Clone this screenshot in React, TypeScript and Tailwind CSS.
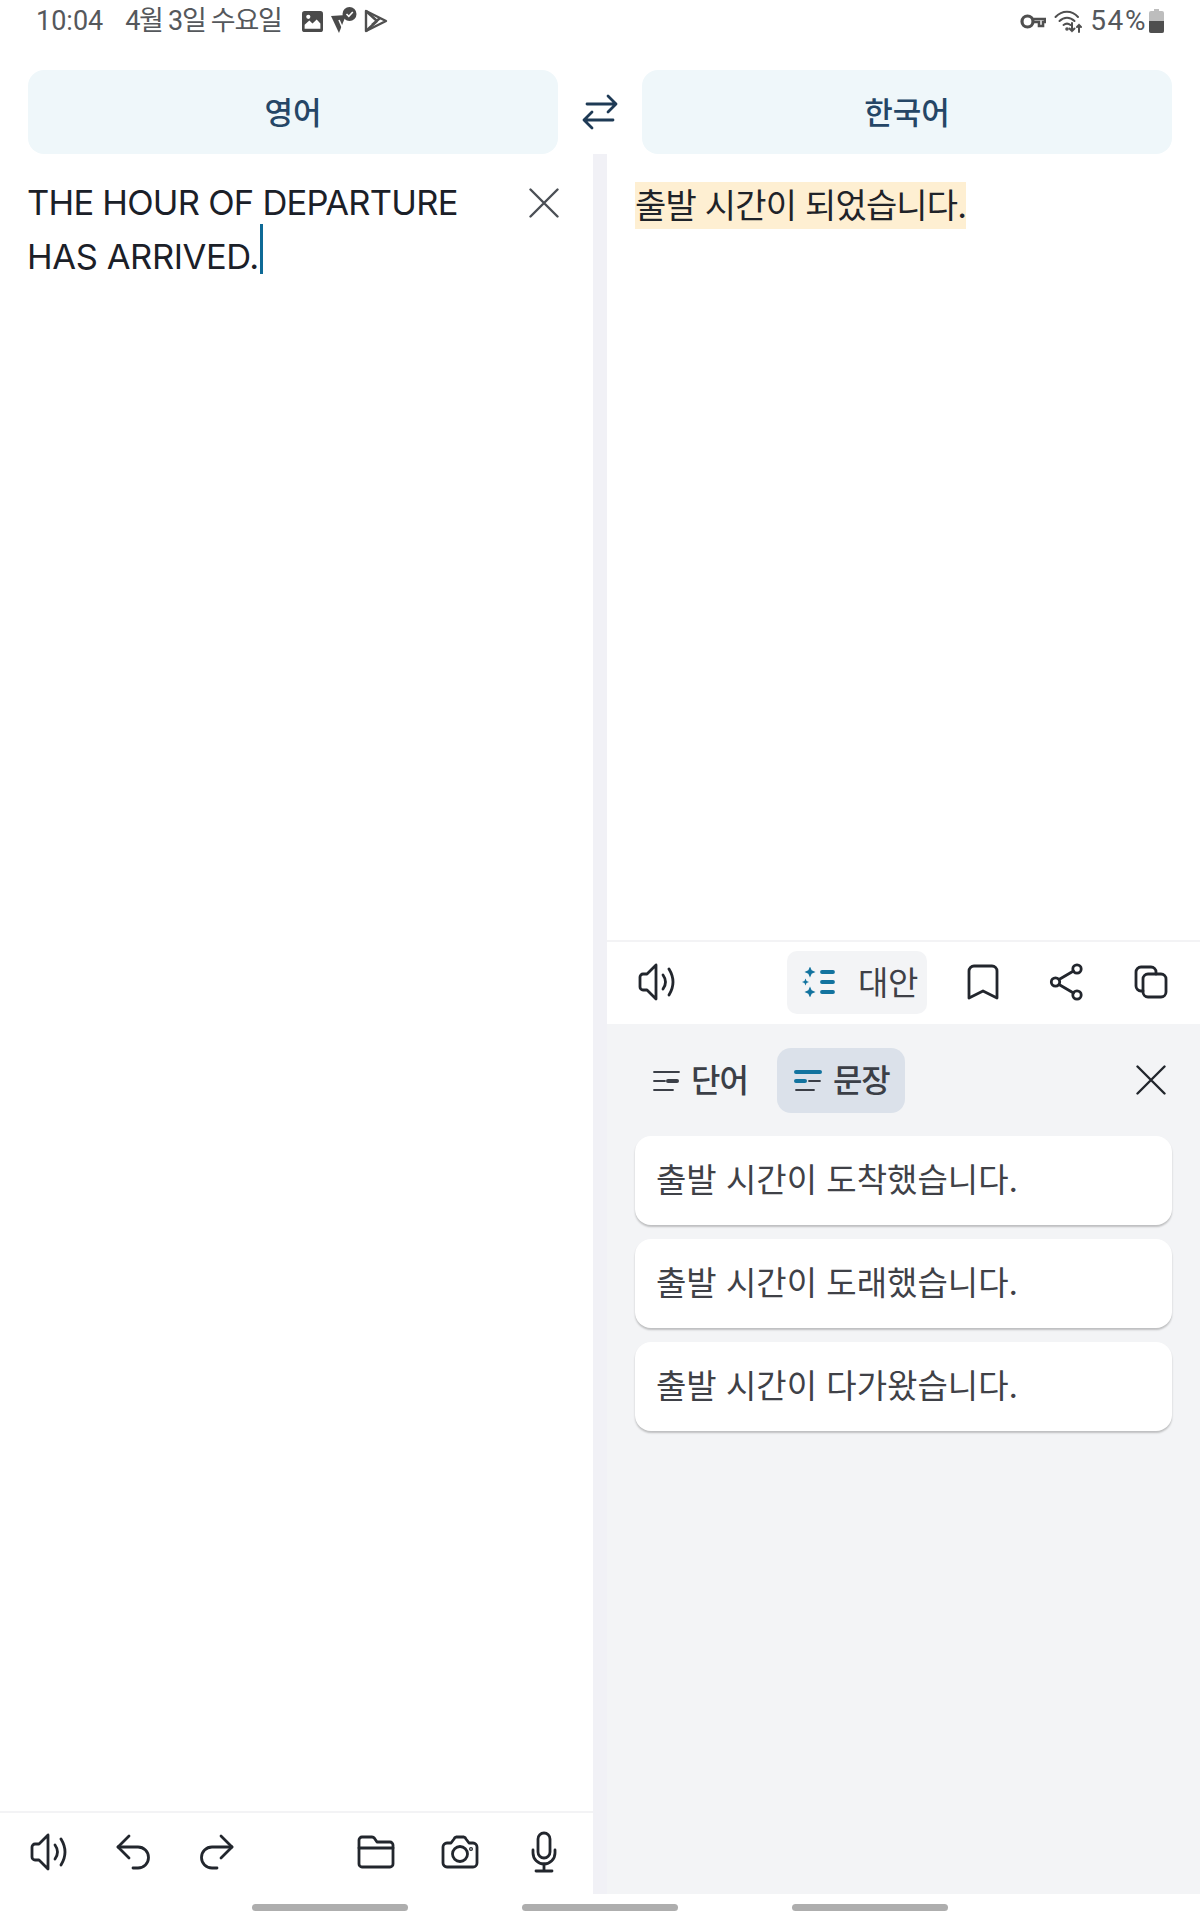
import React from "react";

function Ico({ w, h, className = "", sw = 2.8, children }: { w: number; h: number; className?: string; sw?: number; children: React.ReactNode }) {
  return (
    <svg width={w} height={h} viewBox={`0 0 ${w} ${h}`} fill="none" stroke="currentColor" strokeWidth={sw} strokeLinecap="round" strokeLinejoin="round" className={`shrink-0 ${className}`}>
      {children}
    </svg>
  );
}

const Speaker = () => (
  <Ico w={38} h={38}>
    <path d="M18 2 L9 11 H5 a3 3 0 0 0 -3 3 v10 a3 3 0 0 0 3 3 h4 L18 36 Z" />
    <path d="M25 12 q5 7 0 14" />
    <path d="M31 6 q8 13 0 26" />
  </Ico>
);
const Undo = () => (
  <Ico w={36} h={36}>
    <path d="M14 2 L3 13 L14 24" />
    <path d="M3 13 H23 a10.5 10.5 0 0 1 0 21 H18" />
  </Ico>
);
const Redo = () => (
  <Ico w={36} h={36}>
    <path d="M22 2 L33 13 L22 24" />
    <path d="M33 13 H13 a10.5 10.5 0 0 0 0 21 H18" />
  </Ico>
);
const Folder = () => (
  <Ico w={38} h={34}>
    <path d="M2 12 V5 a3 3 0 0 1 3 -3 H15 a3 3 0 0 1 2.4 1.2 L20 7 H33 a3 3 0 0 1 3 3 V29 a3 3 0 0 1 -3 3 H5 a3 3 0 0 1 -3 -3 Z" />
    <path d="M2 13 H36" />
  </Ico>
);
const Camera = () => (
  <Ico w={38} h={34}>
    <path d="M2 12 a4 4 0 0 1 4 -4 h4 l3 -4 a3 3 0 0 1 2.4 -2 h7.2 a3 3 0 0 1 2.4 2 l3 4 h4 a4 4 0 0 1 4 4 V28 a4 4 0 0 1 -4 4 H6 a4 4 0 0 1 -4 -4 Z" />
    <circle cx="19" cy="19" r="7.5" />
    <circle cx="30" cy="14" r="0.6" />
  </Ico>
);
const Mic = () => (
  <Ico w={26} h={42}>
    <rect x="7" y="2" width="12" height="25" rx="6" />
    <path d="M2 19 v3 a11 11 0 0 0 22 0 v-3" />
    <path d="M13 33 V40 M5 40 H21" />
  </Ico>
);
const Close = ({ size = 30 }: { size?: number }) => (
  <Ico w={size} h={size} sw={2.4}>
    <path d={`M1.5 1.5 L${size - 1.5} ${size - 1.5} M${size - 1.5} 1.5 L1.5 ${size - 1.5}`} />
  </Ico>
);
const Swap = () => (
  <Ico w={36} h={36} sw={2.8}>
    <path d="M5 10 H34 M26 2 L34 10 L26 18" />
    <path d="M31 26 H2 M10 18 L2 26 L10 34" />
  </Ico>
);
const Bookmark = () => (
  <Ico w={32} h={36}>
    <path d="M2 34 V7 a5 5 0 0 1 5 -5 H25 a5 5 0 0 1 5 5 V34 L16 27 Z" />
  </Ico>
);
const Share = () => (
  <Ico w={36} h={38}>
    <circle cx="6.5" cy="19" r="4.2" />
    <circle cx="28" cy="6" r="4.2" />
    <circle cx="28" cy="32" r="4.2" />
    <path d="M10 16.5 L24.5 8 M10 21.5 L24.5 30" />
  </Ico>
);
const Copy = () => (
  <Ico w={34} h={34}>
    <path d="M9 26 H7 a5 5 0 0 1 -5 -5 V7 a5 5 0 0 1 5 -5 H17 a5 5 0 0 1 5 5 V9" />
    <rect x="9" y="9" width="23" height="23" rx="5" />
  </Ico>
);
const Sparkle = ({ cx, cy, r }: { cx: number; cy: number; r: number }) => (
  <path fill="currentColor" stroke="none" d={`M${cx} ${cy - r} L${cx + r * 0.3} ${cy - r * 0.3} L${cx + r} ${cy} L${cx + r * 0.3} ${cy + r * 0.3} L${cx} ${cy + r} L${cx - r * 0.3} ${cy + r * 0.3} L${cx - r} ${cy} L${cx - r * 0.3} ${cy - r * 0.3} Z`} />
);
const Alternatives = () => (
  <Ico w={34} h={30} sw={3.8} className="text-[#12739f]">
    <Sparkle cx={8} cy={5} r={5.5} />
    <Sparkle cx={3.5} cy={15} r={3.5} />
    <Sparkle cx={8} cy={25} r={5.5} />
    <path d="M20 5 H31 M20 15 H31 M20 25 H31" />
  </Ico>
);
const TabWord = () => (
  <svg width="27" height="24" viewBox="0 0 27 24" className="shrink-0">
    <path d="M1 3 H26 M1 12 H12 M1 21 H20" stroke="#3b3f47" strokeWidth="1.8" strokeLinecap="round" />
    <path d="M15 12 H24" stroke="#3b3f47" strokeWidth="4" strokeLinecap="round" />
  </svg>
);
const TabSentence = () => (
  <svg width="28" height="24" viewBox="0 0 28 24" className="shrink-0">
    <path d="M2 3 H26 M2 12 H11" stroke="#12739f" strokeWidth="4" strokeLinecap="round" />
    <path d="M15 12 H26 M2 21 H20" stroke="#3b3f47" strokeWidth="1.8" strokeLinecap="round" />
  </svg>
);

const Alt = ({ text }: { text: string }) => (
  <div className="flex h-[89px] items-center rounded-[16px] bg-white pl-[21px] pt-[1px] text-[#3f4147] text-[33px] shadow-[0_2px_2px_rgba(0,0,0,0.22)]">
    {text}
  </div>
);

export default function App() {
  return (
    <div className="flex h-[1920px] w-[1200px] flex-col overflow-hidden bg-white font-['Inter','Noto_Sans_CJK_KR',sans-serif]">
      {/* status bar */}
      <div className="flex h-[70px] shrink-0 items-start justify-between pl-[36px] pr-[36px] pt-[3px] font-['Roboto','Noto_Sans_CJK_KR',sans-serif] text-[27px] leading-[36px] text-[#55585c]">
        <div className="flex items-center">
          <span>10:04</span>
          <span className="ml-[22px] tracking-[-1.3px]">4월 3일 수요일</span>
          <svg width="21" height="21" viewBox="0 0 20 20" className="ml-[20px]">
            <rect x="0" y="0" width="20" height="20" rx="2.5" fill="#4a4a4a" />
            <path d="M2.5 17 V13 L7 9 L10 12 L14 8 L17.5 12 V17 Z" fill="#fff" />
            <circle cx="6" cy="5.5" r="2" fill="#fff" />
          </svg>
          <svg width="28" height="28" viewBox="0 0 28 28" className="ml-[7px]">
            <path d="M1 9 L16 8 L9 26 Z" fill="#4a4a4a" />
            <path d="M9 13 L13 22" stroke="#fff" strokeWidth="1.6" />
            <circle cx="19.5" cy="7" r="7" fill="#4a4a4a" />
            <path d="M16.5 7 L18.8 9.3 L22.8 5" stroke="#fff" strokeWidth="1.6" fill="none" />
          </svg>
          <svg width="24" height="26" viewBox="0 0 24 26" fill="none" stroke="#4f4f4f" strokeWidth="2.4" strokeLinejoin="round" className="ml-[6px]">
            <path d="M2 3 L22 13 L2 23 Z" />
            <path d="M2 3 L13 13 L2 23 M8 17 L16 10" />
          </svg>
        </div>
        <div className="flex items-center">
          <svg width="26" height="17" viewBox="0 0 26 17" fill="none" stroke="#4f4f4f" strokeWidth="3.2" className="mr-[8px]">
            <circle cx="7.5" cy="8.5" r="5.5" />
            <path d="M13 6 H25 V9 L23 9 V13 H19 V9 H13" strokeWidth="2.6" />
          </svg>
          <svg width="30" height="26" viewBox="0 0 30 26" fill="none" stroke="#4f4f4f" strokeWidth="2" strokeLinecap="round" className="mr-[6px]">
            <path d="M1.5 9 C8 2 18 2 24 9" />
            <path d="M5.5 13 C10 8.5 16 8.5 20.5 13" />
            <path d="M9.5 17 C12 15 14 15 16.5 17" />
            <path d="M18 15 V23 M15.5 20.5 L18 23 L20.5 20.5 M25 24 V17 M23 19 L25 17 L27 19" />
            <circle cx="13" cy="21" r="0.8" />
          </svg>
          <span className="text-[28px] tracking-[1.6px]">54%</span>
          <svg width="15" height="24" viewBox="0 0 15 24" className="ml-[2px]">
            <path d="M5 0 H10 V2 H13 a2 2 0 0 1 2 2 V22 a2 2 0 0 1 -2 2 H2 a2 2 0 0 1 -2 -2 V4 a2 2 0 0 1 2 -2 H5 Z" fill="#bdbdbd" />
            <path d="M0 12 H15 V22 a2 2 0 0 1 -2 2 H2 a2 2 0 0 1 -2 -2 Z" fill="#4f4f4f" />
          </svg>
        </div>
      </div>

      {/* language bar */}
      <div className="flex h-[84px] shrink-0 items-center px-[28px] text-[31px] font-medium text-[#254666]">
        <div className="flex h-full w-[530px] items-center justify-center rounded-[16px] bg-[#eff7fa] pt-[2px]">영어</div>
        <div className="flex flex-1 items-center justify-center text-[#1e3a55]">
          <Swap />
        </div>
        <div className="flex h-full w-[530px] items-center justify-center rounded-[16px] bg-[#eff7fa] pt-[2px]">한국어</div>
      </div>

      {/* panes */}
      <div className="flex h-[1740px] shrink-0">
        <div className="flex w-[593px] flex-col">
          <div className="flex flex-1 items-start justify-between pl-[27px] pr-[34px] pt-[22px]">
            <p className="w-[450px] text-[34.5px] leading-[54px] tracking-[-0.75px] text-[#1b2028]">
              THE HOUR OF DEPARTURE
              <br />
              <span className="tracking-[-0.4px]">HAS ARRIVED.</span>
              <span className="relative inline-block h-0 w-0">
                <span className="absolute left-[1px] top-[-45px] h-[50px] w-[3px] bg-[#0e6a96]" />
              </span>
            </p>
            <div className="mt-[12px] text-[#4b4f55]">
              <Close />
            </div>
          </div>
          <div className="flex h-[83px] items-center border-t-2 border-[#f3f3f5] pb-[3px] pl-[30px] text-[#22262d]">
            <Speaker />
            <div className="ml-[47px]"><Undo /></div>
            <div className="ml-[48px]"><Redo /></div>
            <div className="ml-[122px]"><Folder /></div>
            <div className="ml-[46px]"><Camera /></div>
            <div className="ml-[52px]"><Mic /></div>
          </div>
        </div>

        <div className="w-[14px] bg-[#f1f1f6]" />

        <div className="flex flex-1 flex-col">
          <div className="flex-1 pl-[28px] pt-[28px]">
            <span className="inline-block h-[47px] bg-[#feefd2] text-[34px] leading-[47px] tracking-[-0.8px] text-[#1f2329]">
              출발 시간이 되었습니다.
            </span>
          </div>
          <div className="flex h-[84px] items-center border-t-2 border-[#f3f3f5] pb-[2px] pl-[31px] text-[#22262d]">
            <Speaker />
            <div className="ml-[111px] flex h-[63px] w-[140px] items-center rounded-[10px] bg-[#f3f4f6] pl-[15px] text-[33px] text-[#3f4147]">
              <Alternatives />
              <span className="ml-[22px] pt-[3px] tracking-[-0.4px]">대안</span>
            </div>
            <div className="ml-[40px]"><Bookmark /></div>
            <div className="ml-[50px]"><Share /></div>
            <div className="ml-[49px]"><Copy /></div>
          </div>
          <div className="h-[870px] bg-[#f3f4f6] px-[28px] pt-[24px]">
            <div className="flex items-center">
              <div className="flex h-[65px] items-center pl-[18px] text-[32px] font-medium text-[#3b3f47]">
                <TabWord />
                <span className="ml-[11px] tracking-[-1px]">단어</span>
              </div>
              <div className="ml-[29px] flex h-[65px] w-[128px] items-center rounded-[14px] bg-[#dbe1ea] pl-[17px] text-[32px] font-medium text-[#3b3f47]">
                <TabSentence />
                <span className="ml-[11px] tracking-[-1px]">문장</span>
              </div>
              <div className="mb-[2px] ml-auto mr-[6px] text-[#22262d]">
                <Close />
              </div>
            </div>
            <div className="mt-[23px] flex flex-col gap-[14px]">
              <Alt text="출발 시간이 도착했습니다." />
              <Alt text="출발 시간이 도래했습니다." />
              <Alt text="출발 시간이 다가왔습니다." />
            </div>
          </div>
        </div>
      </div>

      {/* nav bars */}
      <div className="flex flex-1 items-start pl-[252px] pt-[10px]">
        <div className="h-[7px] w-[156px] rounded-full bg-[#aeaeae]" />
        <div className="ml-[114px] h-[7px] w-[156px] rounded-full bg-[#aeaeae]" />
        <div className="ml-[114px] h-[7px] w-[156px] rounded-full bg-[#aeaeae]" />
      </div>
    </div>
  );
}
